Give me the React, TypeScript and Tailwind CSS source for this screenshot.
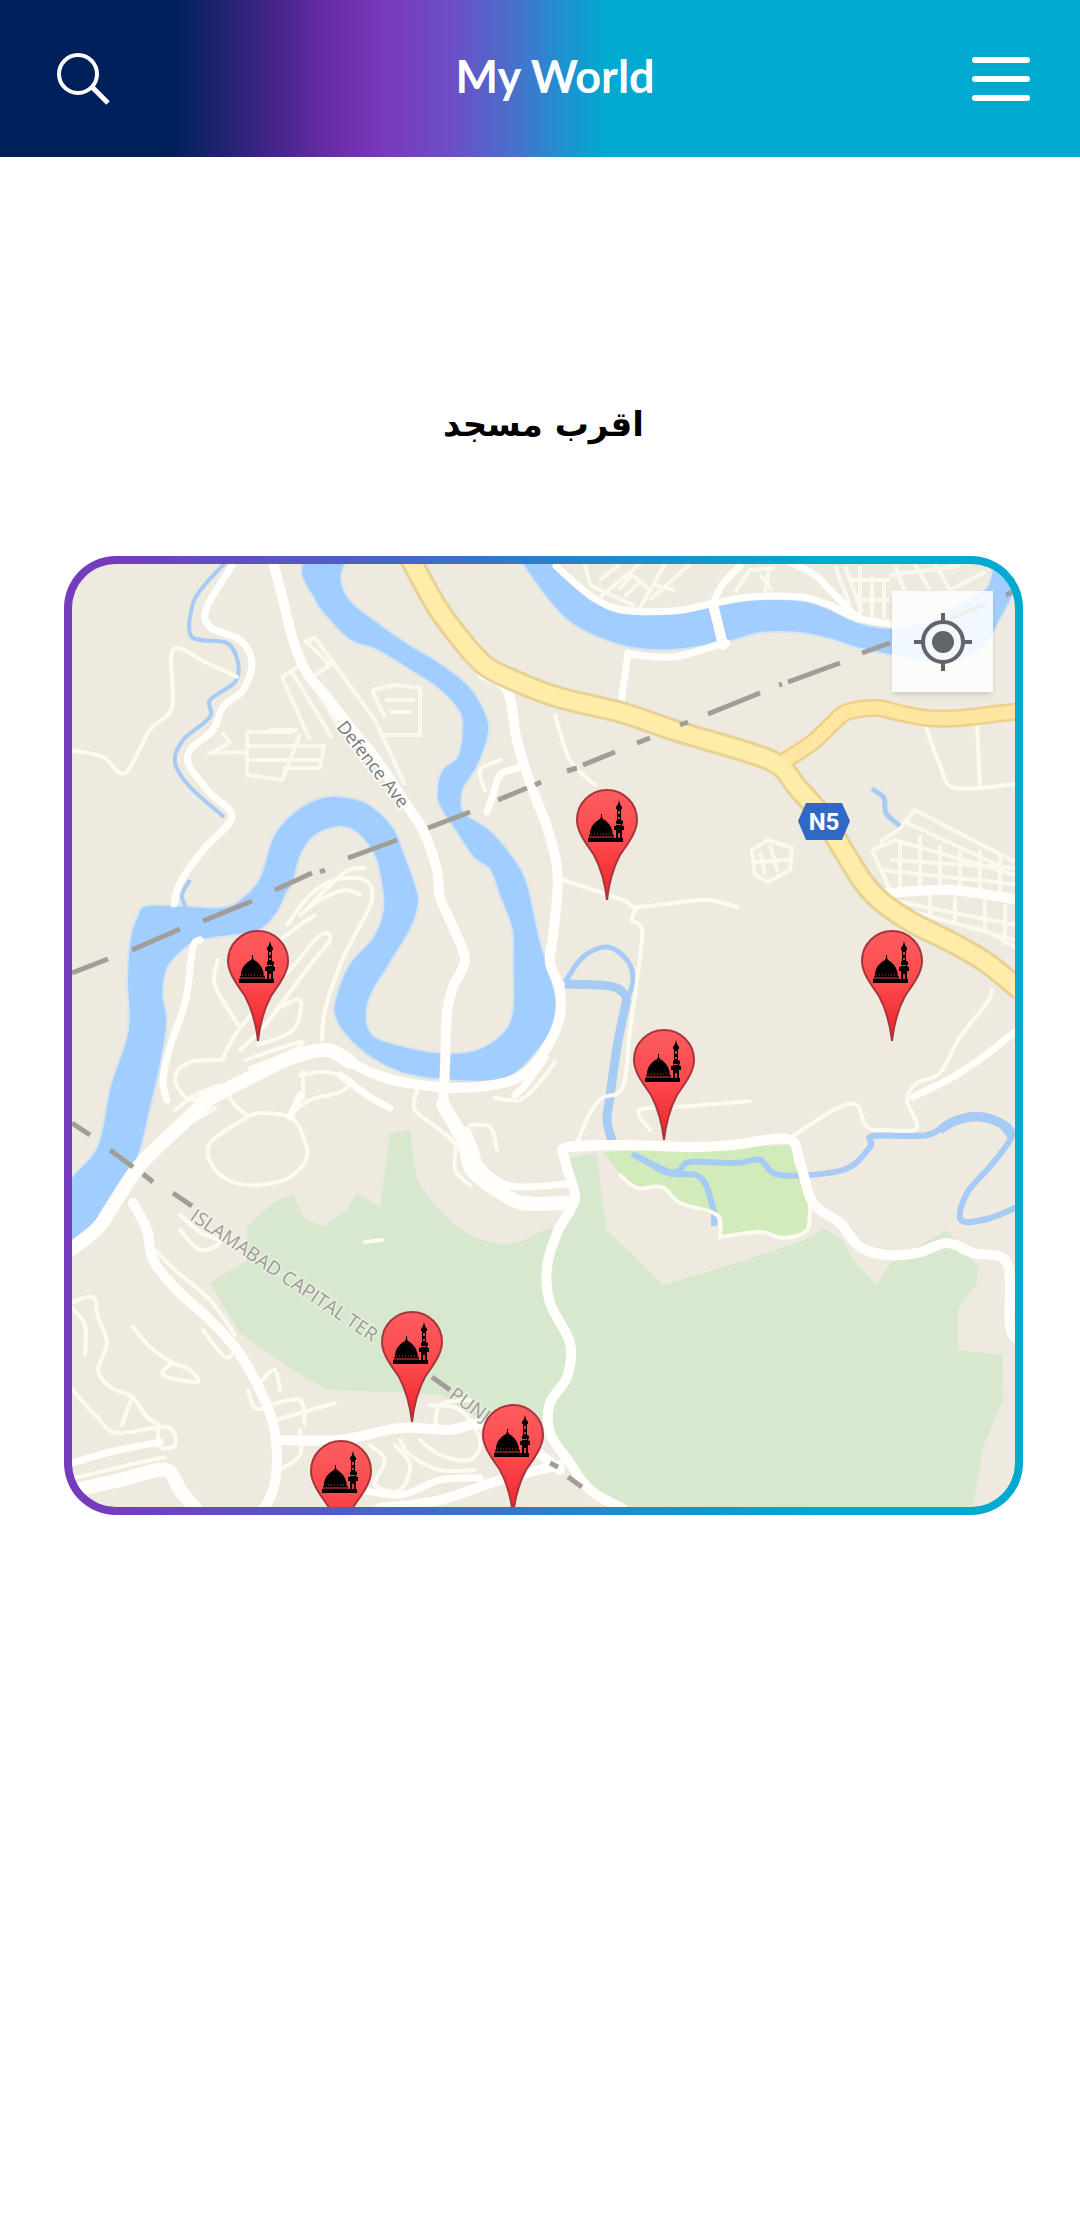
import React from "react";

/* Map artwork is drawn on this canvas; pins use the same coordinates. */
const MAP = { x: 72, y: 564, w: 943, h: 943 };

type Point = [number, number];

function parse(points: string): Point[] {
  return points
    .trim()
    .split(/\s+/)
    .map((p) => p.split(",").map(Number) as Point);
}

/* Turns a list of points into a smooth curve that passes through all of them. */
function curve(points: string, closed = false): string {
  const p = parse(points);
  const n = p.length;
  const at = (i: number): Point =>
    closed ? p[(i + n) % n] : p[Math.max(0, Math.min(n - 1, i))];
  let d = `M${p[0][0]} ${p[0][1]}`;
  const last = closed ? n : n - 1;
  for (let i = 0; i < last; i++) {
    const a = at(i - 1);
    const b = at(i);
    const c = at(i + 1);
    const e = at(i + 2);
    d += `C${b[0] + (c[0] - a[0]) / 6} ${b[1] + (c[1] - a[1]) / 6} ${
      c[0] - (e[0] - b[0]) / 6
    } ${c[1] - (e[1] - b[1]) / 6} ${c[0]} ${c[1]}`;
  }
  return closed ? d + "Z" : d;
}

const mainRiver =
  "347,560 341,578 350,600 377,622 410,645 440,663 470,687 487,717 488,737 477,767 463,790 464,812 490,830 513,857 527,883 540,940 550,973 557,1007 550,1033 523,1067 500,1080 457,1081 410,1075 380,1063 353,1043 335,1017 337,993 350,963 373,937 383,910 382,887 375,857 357,833 337,827 313,837 300,857 293,883 287,892 277,913 260,930 237,935 200,940 183,950 168,967 163,993 167,1023 160,1067 150,1110 137,1160 110,1208 97,1223 66,1250 66,1188 97,1147 110,1087 128,1030 127,980 130,940 137,917 150,905 220,907 243,897 260,877 273,837 293,813 320,798 347,797 370,805 393,827 403,850 417,890 418,907 410,930 390,963 370,997 367,1023 377,1038 407,1047 433,1052 467,1052 490,1043 507,1027 513,1007 513,970 512,930 500,897 490,870 473,857 457,833 440,807 437,790 442,770 457,757 462,733 460,713 440,690 410,670 377,650 350,640 323,613 313,597 302,577 302,560";

const northRiver =
  "555,560 577,587 597,603 623,613 673,613 710,607 750,600 800,600 827,608 857,622 890,628 925,622 960,603 987,587 996,560 1020,560 1016,588 1000,620 985,645 960,660 930,662 890,655 857,648 833,640 800,633 760,633 727,642 673,650 633,648 597,637 567,620 543,593 520,560";

const highway =
  "410,558 437,607 467,647 487,667 513,680 557,697 623,713 673,730 750,753 780,766 797,787 823,817 843,850 864,883 883,903 913,923 953,943 987,963 1020,990";
const highwayBranch =
  "783,762 813,742 833,723 847,712 877,708 900,713 927,718 960,718 1020,711";

const woodland = [
  "M390 1133 L410 1130 L417 1180 L437 1208 L457 1227 Q503 1258 540 1232 L560 1225 L547 1267 L550 1303 L570 1343 L567 1377 L550 1403 L550 1433 L490 1425 L440 1395 L393 1392 L327 1390 L293 1370 L240 1333 L210 1283 L247 1260 L247 1227 L273 1203 L293 1193 L303 1217 L323 1227 L347 1210 L357 1193 L380 1207Z",
  "M568 1158 L597 1153 L603 1207 L607 1230 L663 1285 L740 1262 L813 1237 L823 1228 L843 1240 L853 1260 L877 1285 L890 1263 L947 1230 L978 1267 L977 1283 L958 1310 L958 1350 L1002 1355 L1003 1400 L983 1447 L973 1508 L615 1508 L570 1463 L550 1433 L550 1403 L567 1377 L570 1343 L550 1303 L547 1267 L557 1233 L572 1205Z",
];

const park =
  "M603 1152 L790 1145 L800 1170 L808 1200 L807 1232 L783 1238 L760 1233 L720 1237 L717 1217 L680 1205 L662 1187 L637 1188 L620 1173Z";

const roads: { width: number; lines: string[] }[] = [
  {
    width: 14,
    lines: [
      "443,1105 463,1140 472,1170 497,1190 523,1203 567,1203",
      "350,1062 327,1050 293,1057 247,1079 210,1099 177,1129 140,1165 110,1210 97,1229 66,1253",
      "66,1492 120,1480 165,1470 180,1490 198,1512",
    ],
  },
  {
    width: 10,
    lines: [
      "272,558 283,600 293,640 307,673 327,697 347,723 377,760 410,810 423,830 437,870 440,897 453,927 465,960 453,987 447,1013 445,1067 443,1107",
      "482,674 507,690 517,740 530,783 547,827 557,867 557,897 553,937 550,963 560,990 558,1023 540,1057 513,1080 457,1088 407,1083 377,1075 350,1062",
      "620,1145 567,1147 565,1160 575,1195 570,1210 557,1233 547,1267 550,1303 570,1343 567,1377 550,1403 550,1433 570,1463 590,1490 625,1510",
      "567,1147 623,1145 690,1147 733,1145 788,1139 800,1163 810,1197 820,1210 840,1223 860,1247 887,1255 917,1253 947,1243 973,1253 1007,1263 1010,1327 1020,1340",
      "133,1203 147,1230 153,1260 177,1290 210,1320 237,1350 260,1390 273,1423 277,1460 273,1490 263,1510",
      "713,604 723,645",
      "866,890 885,893 950,890 1020,900",
      "280,1440 340,1440 400,1428 450,1430 480,1424 520,1440 560,1470",
      "380,1508 440,1500 500,1480 560,1465",
    ],
  },
  {
    width: 7,
    lines: [
      "628,653 620,710",
      "628,654 673,657 717,645 727,643",
      "713,604 722,585 740,566",
      "556,566 577,585 597,600 623,610 673,611 710,604 750,597 800,597 827,604 857,618 890,624",
      "790,562 815,575 835,595 857,618",
      "232,566 207,607 210,627 240,640 252,663 243,690 223,707 213,730 190,750 190,767 210,793 232,817 203,850 180,883 174,904",
      "517,768 500,775 493,795 487,812",
      "545,1058 525,1085 515,1095",
      "913,1097 953,1077 983,1057 1020,1028",
      "200,940 193,947 188,987 183,1010 170,1047 163,1080 167,1100",
      "467,1130 475,1150 480,1165 497,1180 520,1187 566,1184",
      "340,1508 350,1490 400,1495 440,1480 480,1478",
      "66,1465 110,1452 160,1442",
      "340,1075 370,1097 390,1108",
      "300,1095 290,1117",
    ],
  },
  {
    width: 4,
    lines: [
      "70,750 103,757 125,773 150,730 172,707 173,650 207,663 237,677",
      "563,880 623,900 637,907 703,900 737,907",
      "637,907 632,920 642,930 638,973 630,1030 623,1087 602,1098 590,1113 577,1143",
      "790,1138 817,1120 840,1107 857,1105 867,1127 887,1130 917,1128 907,1100 917,1083 940,1073 960,1037 987,1003 992,990",
      "650,1130 640,1110 690,1106 750,1101",
      "720,1237 760,1232 783,1238 807,1230 810,1205",
      "620,1175 637,1188 662,1187 680,1203 717,1215 720,1237",
      "247,1117 210,1143 213,1167 233,1182 260,1185 290,1177 307,1157 302,1133 290,1117 260,1113 247,1117",
      "290,1115 310,1100 340,1092 350,1080 325,1072 300,1075",
      "303,1072 303,1098",
      "225,1090 235,1105 247,1115",
      "245,1060 300,1042 290,1052 250,1068",
      "223,1058 240,1028 290,970 320,935 330,940 310,965 265,1025 240,1050",
      "223,1060 190,1062 175,1078 190,1100 215,1088",
      "240,1028 215,985 218,960",
      "275,1010 300,1000 293,1030 258,1045",
      "287,925 310,895 335,880 365,880 372,900 355,935 340,965 325,1010 322,1040",
      "300,915 320,900 345,890 360,895",
      "280,940 300,925 315,915",
      "310,905 345,872 365,868",
      "175,1110 195,1095 220,1085",
      "155,1155 180,1130 215,1108",
      "417,1090 415,1110 440,1130 455,1145 455,1170 470,1185",
      "470,1125 490,1127 497,1150",
      "495,1098 520,1100 540,1082 555,1062",
      "555,715 570,760 595,785",
      "485,790 480,770 500,760",
      "925,725 940,765 955,788 1016,784",
      "977,725 980,787",
      "70,1303 93,1297 98,1317 107,1343 98,1370 110,1387 132,1397 147,1417 160,1425",
      "72,1308 85,1325 85,1355",
      "70,1387 97,1417 117,1433 167,1427 175,1445 160,1447 158,1430",
      "132,1397 122,1425",
      "133,1327 150,1347 173,1363 190,1370 197,1382 163,1375 173,1362",
      "180,1215 200,1232 220,1242 200,1250 180,1230",
      "155,1250 175,1270 210,1300 235,1335",
      "203,1330 225,1357 236,1350",
      "248,1390 255,1408 268,1408",
      "262,1380 275,1370 280,1390",
      "270,1405 300,1400 305,1425",
      "275,1420 335,1403",
      "280,1470 300,1455 300,1430",
      "370,1445 385,1460 375,1485 400,1490 410,1465 395,1445",
      "430,1405 460,1410 480,1440 470,1460 440,1455 420,1440",
      "400,1440 410,1455 440,1470 475,1470",
      "435,1430 440,1405 470,1400",
      "365,1242 382,1240",
      "66,1480 120,1467 165,1457",
    ],
  },
];

/* Residential blocks: straight, thin streets. */
const blocks = [
  "M282 677 L300 665 L345 735 M282 677 L310 740 M292 672 L332 738 M270 730 H298 M247 732 V775 L282 780 L300 735 M247 732 H295 M248 746 H324 L320 768 H283 M248 760 H320 M207 753 L247 752 M222 733 L230 742 L212 753",
  "M304 642 L315 638 L375 720 L405 785 M315 675 L330 665 L305 640 M372 690 L395 685 L420 688 V735 H380 M385 700 H415 M390 712 H412 M372 690 L385 718",
  "M585 564 L590 585 L635 606 M600 580 L620 564 M640 608 L665 564 M600 597 L640 564 M618 590 L632 575 L650 590 M625 596 L640 582 M650 600 L690 564 M655 585 L675 590",
  "M760 575 L772 590 M770 566 L765 592 M735 592 L750 570 L775 568",
  "M835 566 L850 605 M845 566 L862 612 M860 566 V616 M872 575 V618 M884 580 V618 M850 580 H890 M855 600 H890 M895 566 L905 592 M915 564 L930 590 M935 564 L950 590 M890 575 L960 566 M950 590 L985 572",
  "M872 850 L895 840 L1015 875 M880 870 L1015 884 M880 842 L898 830 L915 810 L1015 862 M905 822 L1000 866 M872 850 L890 890 M900 842 V890 M920 835 V892 M940 845 V892 M960 850 V893 M980 850 V895 M1000 855 V897 M890 860 L1015 868",
  "M890 900 L1015 925 M900 908 L1015 940 M930 895 V915 M955 897 V925 M985 900 V930 M1005 904 V945 M960 925 L985 930 L1015 947",
  "M752 850 L768 840 L792 848 L790 870 L768 882 L755 875 Z M760 852 L765 875 M770 845 L778 872 M755 862 L790 860",
];

const streams: { width: number; points: string }[] = [
  {
    width: 4,
    points:
      "226,562 203,587 192,607 192,637 227,643 238,663 235,682 210,700 210,717 183,740 175,763 190,787 224,817",
  },
  { width: 4, points: "190,880 182,895 186,908" },
  { width: 5, points: "565,982 583,957 607,947 627,960 633,980 626,1003" },
  { width: 9, points: "565,984 600,985 617,988 628,998" },
  { width: 9, points: "627,998 617,1047 610,1097 607,1120 612,1141" },
  {
    width: 6,
    points:
      "632,1154 667,1171 680,1170 690,1162 737,1163 760,1160 780,1175 843,1170 870,1147 873,1136 927,1135 953,1120 977,1115 1000,1121 1012,1135 993,1163 967,1193 961,1220 987,1219 1020,1206",
  },
  { width: 9, points: "940,1130 955,1121 977,1117 1000,1123 1011,1135" },
  { width: 6, points: "640,1157 667,1173 700,1177 713,1208 714,1226" },
  { width: 5, points: "872,789 884,798 886,813 900,826" },
];

const boundary =
  "M72 973L108 959M132 950L180 929M203 921L252 901M275 890L312 873M320 872L325 870M348 858L397 840M428 828L470 812M498 800L527 788M535 785L541 782M567 771L577 768M583 765L615 752M637 743L650 738M680 725L688 722M708 714L760 693M779 685L782 684M788 682L840 663M862 653L890 643M930 627L985 604M1006 595L1016 590M72 1123L90 1135M110 1150L133 1167M143 1174L153 1182M173 1193L192 1206M432 1377L450 1390M550 1463L558 1467M568 1477L582 1487";

function MapArtwork() {
  return (
    <svg
      className="absolute inset-0 h-full w-full"
      viewBox={`${MAP.x} ${MAP.y} ${MAP.w} ${MAP.h}`}
      preserveAspectRatio="xMidYMid slice"
      role="img"
      aria-label="Map"
    >
      <rect x="72" y="564" width="943" height="943" fill="#eeeae0" />
      {woodland.map((d) => (
        <path key={d} d={d} fill="#d7e8ce" />
      ))}
      <path d={park} fill="#d2ebbb" />
      <g fill="none" stroke="#fbf8ef" strokeWidth="4" strokeLinejoin="round">
        {blocks.map((d) => (
          <path key={d} d={d} />
        ))}
      </g>
      <path
        d={curve(mainRiver)}
        fill="#a1cdff"
        stroke="#d5e4ee"
        strokeWidth="2"
      />
      <path
        d={curve(northRiver)}
        fill="#a1cdff"
        stroke="#d5e4ee"
        strokeWidth="2"
      />
      <g fill="none" stroke="#a6cbf5" strokeLinejoin="round">
        {streams.map((s) => (
          <path key={s.points} d={curve(s.points)} strokeWidth={s.width} />
        ))}
      </g>
      {[...roads].reverse().map((group) => (
        <g
          key={group.width}
          fill="none"
          stroke={group.width > 4 ? "#fffefb" : "#fcfaf1"}
          strokeWidth={group.width}
          strokeLinejoin="round"
          strokeLinecap="round"
        >
          {group.lines.map((l) => (
            <path key={l} d={curve(l)} />
          ))}
        </g>
      ))}
      <g fill="none" strokeLinejoin="round">
        <path d={curve(highwayBranch)} stroke="#ecd08b" strokeWidth="18" />
        <path d={curve(highway)} stroke="#e5d294" strokeWidth="23" />
        <path d={curve(highwayBranch)} stroke="#fee5a0" strokeWidth="13" />
        <path d={curve(highway)} stroke="#feeca8" strokeWidth="17" />
      </g>
      <path d={boundary} fill="none" stroke="#a19e9a" strokeWidth="5" />
      <g
        fontFamily="'Open Sans', 'Liberation Sans', sans-serif"
        fill="#7c7876"
        stroke="#ffffff"
        strokeWidth="3"
        paintOrder="stroke"
      >
        <text transform="translate(336 727) rotate(52)" fontSize="18">
          Defence Ave
        </text>
        <g fill="#a09b96" strokeOpacity="0.4">
          <text transform="translate(189 1219) rotate(34)" fontSize="19">
            ISLAMABAD CAPITAL TER
          </text>
          <text transform="translate(448 1397) rotate(36)" fontSize="19">
            PUNJAB
          </text>
        </g>
      </g>
      <path d="M806 803H842L850 821L842 840H806L798 821Z" fill="#2f69c3" />
      <text
        x="824"
        y="830"
        textAnchor="middle"
        fontFamily="Roboto, sans-serif"
        fontWeight="700"
        fontSize="24"
        fill="#ffffff"
      >
        N5
      </text>
    </svg>
  );
}

/* Tip column and top edge of each pin on the map canvas. */
const pins = [
  { x: 607, y: 789 },
  { x: 258, y: 930 },
  { x: 892, y: 930 },
  { x: 664, y: 1029 },
  { x: 412, y: 1311 },
  { x: 341, y: 1440 },
  { x: 513, y: 1404 },
];

function PinIcon() {
  return (
    <svg viewBox="0 0 62 112" className="block w-full" aria-hidden="true">
      <defs>
        <linearGradient id="pin-fill" x1="0" y1="0" x2="0" y2="1">
          <stop offset="0" stopColor="#fd5c60" />
          <stop offset="0.5" stopColor="#fb484b" />
          <stop offset="1" stopColor="#f01f2c" />
        </linearGradient>
      </defs>
      <path
        d="M31 111C29 93 25 79 18 66C10 54 1 43 1 31A30 30 0 0 1 61 31C61 43 52 54 44 66C37 79 33 93 31 111Z"
        fill="url(#pin-fill)"
        stroke="#a8343c"
        strokeWidth="2"
      />
      <path d="M12 49H47V53H12Z" />
      <path d="M13 47L14 45C14 39 17 34 24 30L25 28V25H26V28L27 30C34 34 36 39 37 45L38 47V49H13Z" />
      <path d="M15 45H37" stroke="#d8363a" strokeWidth="1" strokeDasharray="1 2" />
      <path d="M43 11L44 15L46 18V20H45V31L47 32V34L46 36L47 37H48V41H46V51H40V41H38V37H39L41 36L40 34V32L41 31V20H40V18L42 15Z" />
      <path
        d="M42 22H44V25H42ZM42 28H44V30H42ZM42 44H44V49H42ZM41 35H45V36H41Z"
        fill="#e8393e"
      />
      <path d="M12 48H39" stroke="#e8393e" strokeWidth="1" />
    </svg>
  );
}

function NearestMosqueMap() {
  return (
    <div className="rounded-[52px] bg-[linear-gradient(90deg,#753bbd_5%,#00a9ce_78%)] p-2">
      <div className="relative aspect-square overflow-hidden rounded-[44px]">
        <MapArtwork />
        {pins.map((pin) => (
          <button
            key={`${pin.x}-${pin.y}`}
            type="button"
            aria-label="مسجد"
            className="absolute w-[7%] max-w-[62px] -translate-x-1/2 cursor-pointer"
            style={{
              left: `${((pin.x - MAP.x) / MAP.w) * 100}%`,
              top: `${((pin.y - MAP.y) / MAP.h) * 100}%`,
            }}
          >
            <PinIcon />
          </button>
        ))}
        <button
          type="button"
          aria-label="My location"
          className="absolute top-[27px] right-[22px] flex size-[101px] items-center justify-center bg-white/85 shadow-md"
        >
          <svg viewBox="0 0 60 60" className="size-[60px]" aria-hidden="true">
            <circle cx="30" cy="30" r="20" fill="none" stroke="#626468" strokeWidth="4" />
            <circle cx="30" cy="30" r="11" fill="#626468" />
            <path
              d="M30 1V10M30 50V59M1 30H10M50 30H59"
              stroke="#626468"
              strokeWidth="4"
            />
          </svg>
        </button>
      </div>
    </div>
  );
}

export default function App() {
  return (
    <div className="min-h-screen bg-white">
      <header className="flex h-[157px] items-center justify-between bg-[linear-gradient(90deg,#00205b_16%,#3a2480_24%,#6b2ca9_31%,#793abd_36%,#6c4fc6_42%,#4473cc_48%,#2090cf_52%,#00a9d0_56%)] pr-[50px] pl-14">
        <button type="button" aria-label="Search" className="w-[82px]">
          <svg viewBox="0 0 54 54" className="size-[54px]" fill="none" stroke="#fff" aria-hidden="true">
            <circle cx="22" cy="22" r="19" strokeWidth="4" />
            <path d="M36 35L52 51" strokeWidth="5" />
          </svg>
        </button>
        <p className="pb-1 font-['Lato',sans-serif] text-[45px] leading-none font-bold text-white">
          My World
        </p>
        <button
          type="button"
          aria-label="Menu"
          className="flex w-[58px] flex-col gap-[13px]"
        >
          <span className="h-[6px] w-full rounded-full bg-white" />
          <span className="h-[6px] w-full rounded-full bg-white" />
          <span className="h-[6px] w-full rounded-full bg-white" />
        </button>
      </header>

      <main className="pr-[57px] pl-16">
        <h1
          dir="rtl"
          lang="ar"
          className="pt-[235px] pb-[100px] text-center font-['DejaVu_Sans',sans-serif] text-[34px] leading-[64px] font-bold text-black"
        >
          اقرب مسجد
        </h1>
        <NearestMosqueMap />
      </main>
    </div>
  );
}
